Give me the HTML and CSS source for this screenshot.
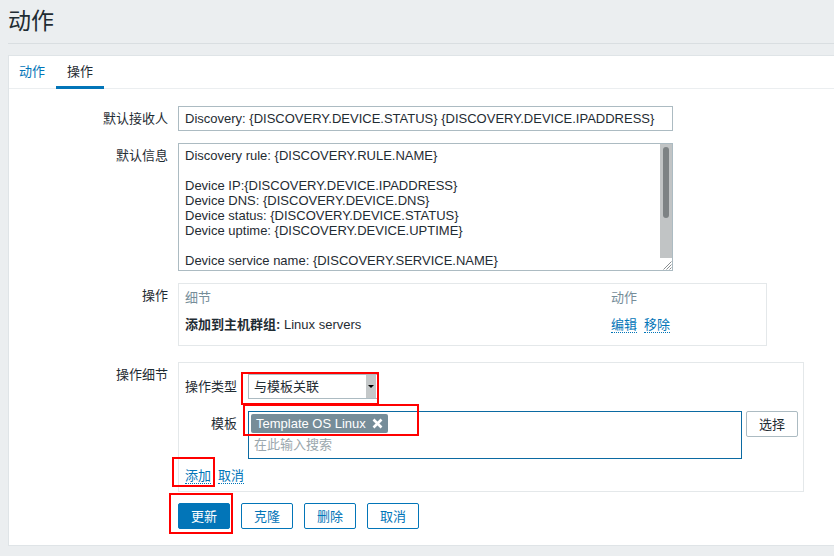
FILE: index.html
```html
<!DOCTYPE html>
<html lang="zh-CN">
<head>
<meta charset="utf-8">
<title>动作</title>
<link rel="stylesheet" href="styles.css">
</head>
<body>
<header class="page-header">
  <h1 class="page-title">动作</h1>
</header>
<main class="panel">
  <nav class="tabs">
    <a class="tab tab-link">动作</a>
    <a class="tab tab-active">操作</a>
  </nav>
  <form class="form">
    <div class="row">
      <label class="lbl">默认接收人</label>
      <div class="ctl">
        <div class="input input-wide">Discovery: {DISCOVERY.DEVICE.STATUS} {DISCOVERY.DEVICE.IPADDRESS}</div>
      </div>
    </div>
    <div class="row row-gap12">
      <label class="lbl">默认信息</label>
      <div class="ctl">
        <div class="textarea">
          <div class="ta-text">Discovery rule: {DISCOVERY.RULE.NAME}

Device IP:{DISCOVERY.DEVICE.IPADDRESS}
Device DNS: {DISCOVERY.DEVICE.DNS}
Device status: {DISCOVERY.DEVICE.STATUS}
Device uptime: {DISCOVERY.DEVICE.UPTIME}

Device service name: {DISCOVERY.SERVICE.NAME}</div>
          <div class="ta-scroll">
            <div class="ta-track"><div class="ta-thumb"></div></div>
            <div class="ta-corner">
              <svg width="12" height="12" viewBox="0 0 12 12"><path d="M11.5 3.5 L3.5 11.5 M11.5 6.5 L6.5 11.5 M11.5 9.5 L9.5 11.5" stroke="#8a8f91" stroke-width="1" fill="none"/></svg>
            </div>
          </div>
        </div>
      </div>
    </div>
    <div class="row row-gap12">
      <label class="lbl">操作</label>
      <div class="ctl">
        <div class="ops-box">
          <table class="ops-table">
            <thead>
              <tr><th class="col-detail">细节</th><th>动作</th></tr>
            </thead>
            <tbody>
              <tr>
                <td><b>添加到主机群组:</b> Linux servers</td>
                <td><span class="links"><a class="link">编辑</a><a class="link">移除</a></span></td>
              </tr>
            </tbody>
          </table>
        </div>
      </div>
    </div>
    <div class="row row-gap16">
      <label class="lbl">操作细节</label>
      <div class="ctl">
        <div class="detail-box">
          <div class="sub-row">
            <label class="sub-lbl">操作类型</label>
            <div class="select">
              <span class="select-text">与模板关联</span>
              <span class="select-arrow"><span class="tri"></span></span>
              <span class="mark mark-select"></span>
            </div>
          </div>
          <div class="sub-row sub-row-gap">
            <label class="sub-lbl">模板</label>
            <div class="multiselect">
              <span class="tag">Template OS Linux<svg class="tag-x" width="11" height="11" viewBox="0 0 11 11"><path d="M1.5 1.5 L9.5 9.5 M9.5 1.5 L1.5 9.5" stroke="#ffffff" stroke-width="2.6" stroke-linecap="butt" fill="none"/></svg><span class="mark mark-tag"></span></span>
              <div class="placeholder">在此输入搜索</div>
            </div>
            <button type="button" class="btn-grey">选择</button>
          </div>
          <div class="links-row">
            <a class="link">添加</a><a class="link">取消</a>
            <span class="mark mark-add"></span>
          </div>
        </div>
      </div>
    </div>
    <div class="buttons">
      <span class="btn-wrap">
        <button type="button" class="btn btn-primary">更新</button>
        <span class="mark mark-update"></span>
      </span>
      <button type="button" class="btn btn-alt">克隆</button>
      <button type="button" class="btn btn-alt">删除</button>
      <button type="button" class="btn btn-alt">取消</button>
    </div>
  </form>
</main>
</body>
</html>
```

FILE: styles.css
```css
* {
  box-sizing: border-box;
}

html, body {
  overflow: hidden;
}

body {
  margin: 0;
  background: #ebeef0;
  font-family: "Liberation Sans", Arial, "Noto Sans CJK SC", sans-serif;
  font-size: 13px;
  line-height: 15px;
  color: #1f2c33;
}

.page-header {
  margin-left: 8px;
  height: 44px;
  border-bottom: 1px solid #d9dee1;
}

.page-title {
  margin: 0;
  font-size: 23px;
  font-weight: normal;
  line-height: 43px;
  color: #1f2c33;
}

.panel {
  display: block;
  margin: 11px 0 0 8px;
  width: 826px;
  background: #ffffff;
  border: 1px solid #dfe4e7;
  border-right: 0;
  padding-bottom: 16px;
}

.tabs {
  display: flex;
  height: 33px;
  border-bottom: 1px solid #ebeef0;
}

.tab {
  display: block;
  padding: 8px 11px 0 11px;
  height: 33px;
  line-height: 15px;
  cursor: pointer;
}

.tab:first-child {
  padding-left: 10px;
}

.tab-link {
  color: #0275b8;
}

.tab-active {
  color: #1f2c33;
  border-bottom: 3px solid #0275b8;
}

.form {
  padding-top: 17px;
}

.row {
  display: flex;
}

.row-gap12 {
  margin-top: 12px;
}

.row-gap16 {
  margin-top: 16px;
}

.lbl {
  width: 159px;
  flex-shrink: 0;
  text-align: right;
  padding-top: 5px;
}

.ctl {
  margin-left: 10px;
}

.input {
  height: 25px;
  border: 1px solid #acbbc2;
  padding: 4px 6px;
  white-space: nowrap;
  overflow: hidden;
}

.input-wide {
  width: 495px;
}

.textarea {
  width: 495px;
  height: 128px;
  border: 1px solid #acbbc2;
  display: flex;
}

.ta-text {
  flex: 1;
  padding: 4px 6px 0 6px;
  white-space: pre;
  overflow: hidden;
}

.ta-scroll {
  width: 12px;
  display: flex;
  flex-direction: column;
}

.ta-track {
  flex: 1;
  background: #c1c4c5;
  padding: 3px 3px 0 3px;
}

.ta-thumb {
  width: 6px;
  height: 71px;
  background: #7d8284;
  border-radius: 3px;
}

.ta-corner {
  height: 12px;
  background: #ffffff;
  display: flex;
}

.ops-box {
  width: 589px;
  height: 63px;
  border: 1px solid #e4e8ea;
}

.ops-table {
  width: 100%;
  border-collapse: collapse;
}

.ops-table th,
.ops-table td {
  text-align: left;
  padding: 6px 6px;
  line-height: 15px;
  vertical-align: top;
}

.ops-table th {
  font-weight: normal;
  color: #768d99;
}

.col-detail {
  width: 426px;
}

.ops-table b {
  font-weight: bold;
}

.links {
  display: flex;
  gap: 7px;
  height: 15px;
}

.link {
  color: #0275b8;
  border-bottom: 1px dotted #0275b8;
  cursor: pointer;
  line-height: 15px;
  height: 16px;
}

.detail-box {
  width: 626px;
  height: 130px;
  border: 1px solid #e4e8ea;
  padding: 11px 5px 0 6px;
}

.sub-row {
  display: flex;
  align-items: flex-start;
}

.sub-row-gap {
  margin-top: 12px;
}

.sub-lbl {
  width: 52px;
  flex-shrink: 0;
  text-align: right;
  padding-top: 5px;
  margin-right: 11px;
}

.select {
  position: relative;
  width: 130px;
  height: 25px;
  border: 1px solid #acbbc2;
  display: flex;
  align-items: stretch;
}

.select-text {
  flex: 1;
  padding: 4px 5px;
  white-space: nowrap;
}

.select-arrow {
  width: 10px;
  background: #c4c8c9;
  display: flex;
  align-items: center;
  justify-content: center;
  margin-right: 1px;
}

.tri {
  width: 0;
  height: 0;
  border-left: 3px solid transparent;
  border-right: 3px solid transparent;
  border-top: 3px solid #000000;
}

.multiselect {
  width: 494px;
  height: 48px;
  border: 1px solid #0b6aa2;
  padding: 2px 2px 0 2px;
}

.tag {
  position: relative;
  display: inline-flex;
  align-items: center;
  height: 19px;
  padding: 0 5px;
  background: #768d99;
  color: #ffffff;
  border-radius: 2px;
  white-space: nowrap;
  vertical-align: top;
}

.tag-x {
  margin-left: 6px;
  display: block;
}

.placeholder {
  margin-top: 4px;
  padding-left: 3px;
  color: #9ba7ad;
}

.btn-grey {
  margin-left: 4px;
  height: 26px;
  padding: 0 12px;
  border: 1px solid #acbbc2;
  border-radius: 2px;
  background: #ffffff;
  color: #1f2c33;
  font-family: inherit;
  font-size: 13px;
  line-height: 15px;
}

.links-row {
  position: relative;
  display: flex;
  gap: 7px;
  height: 16px;
  margin-top: 9px;
}

.buttons {
  display: flex;
  gap: 11px;
  margin: 11px 0 0 169px;
}

.btn-wrap {
  position: relative;
  display: flex;
}

.btn {
  height: 26px;
  padding: 0 12px;
  border: 1px solid #0275b8;
  border-radius: 2px;
  font-family: inherit;
  font-size: 13px;
  line-height: 15px;
}

.btn-primary {
  background: #0275b8;
  color: #ffffff;
}

.btn-alt {
  background: #ffffff;
  color: #0275b8;
}

.mark {
  position: absolute;
  border: 2px solid #ff0000;
  pointer-events: none;
}

.mark-select {
  left: -8px;
  top: -3px;
  right: -2px;
  bottom: -7px;
}

.mark-tag {
  left: -8px;
  top: -10px;
  right: -31px;
  bottom: -3px;
}

.mark-add {
  left: -13px;
  top: -11px;
  width: 43px;
  height: 30px;
}

.mark-update {
  left: -9px;
  top: -10px;
  right: -3px;
  bottom: -5px;
}
```
